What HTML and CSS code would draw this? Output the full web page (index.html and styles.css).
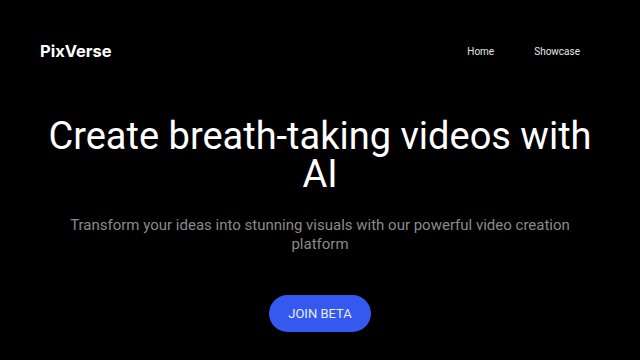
FILE: index.html
```html
<!DOCTYPE html>
<html lang="en">
<head>
<meta charset="utf-8">
<title>PixVerse</title>
<link rel="stylesheet" href="styles.css">
</head>
<body>
<header class="header">
  <div class="logo">PixVerse</div>
  <nav class="nav">
    <a class="nav-link" href="#">Home</a>
    <a class="nav-link" href="#">Showcase</a>
  </nav>
</header>
<main class="hero">
  <h1 class="title">Create breath-taking videos with AI</h1>
  <p class="subtitle">Transform your ideas into stunning visuals with our powerful video creation platform</p>
  <a class="cta" href="#">JOIN BETA</a>
</main>
</body>
</html>
```
FILE: styles.css
```css
* { box-sizing: border-box; }
html, body { margin: 0; padding: 0; background: #000; }
body {
  width: 640px;
  height: 360px;
  overflow: hidden;
  font-family: Roboto, "Liberation Sans", sans-serif;
  color: #fff;
}
.header {
  display: flex;
  align-items: center;
  justify-content: space-between;
  padding: 40px 60px 0 40px;
  height: 62px;
}
.logo {
  font-family: Inter, "Liberation Sans", sans-serif;
  font-weight: 700;
  font-size: 16.5px;
  color: #fff;
  line-height: 20px;
}
.nav {
  display: flex;
  gap: 40px;
  padding-top: 2px;
}
.nav-link {
  font-size: 10px;
  color: #e6e6e6;
  text-decoration: none;
  line-height: 14px;
}
.hero {
  display: flex;
  flex-direction: column;
  align-items: center;
  text-align: center;
  padding: 55px 30px 0;
}
.title {
  margin: 0;
  font-size: 38px;
  font-weight: 400;
  line-height: 38px;
  color: #fff;
  width: 580px;
}
.subtitle {
  margin: 23px 0 0;
  font-size: 15px;
  line-height: 19px;
  color: #8a8a8a;
  width: 540px;
}
.cta {
  margin-top: 41px;
  display: flex;
  align-items: center;
  justify-content: center;
  width: 102px;
  height: 37px;
  border-radius: 19px;
  background: #3558ee;
  color: #e8ecff;
  font-size: 13px;
  text-decoration: none;
}
```
